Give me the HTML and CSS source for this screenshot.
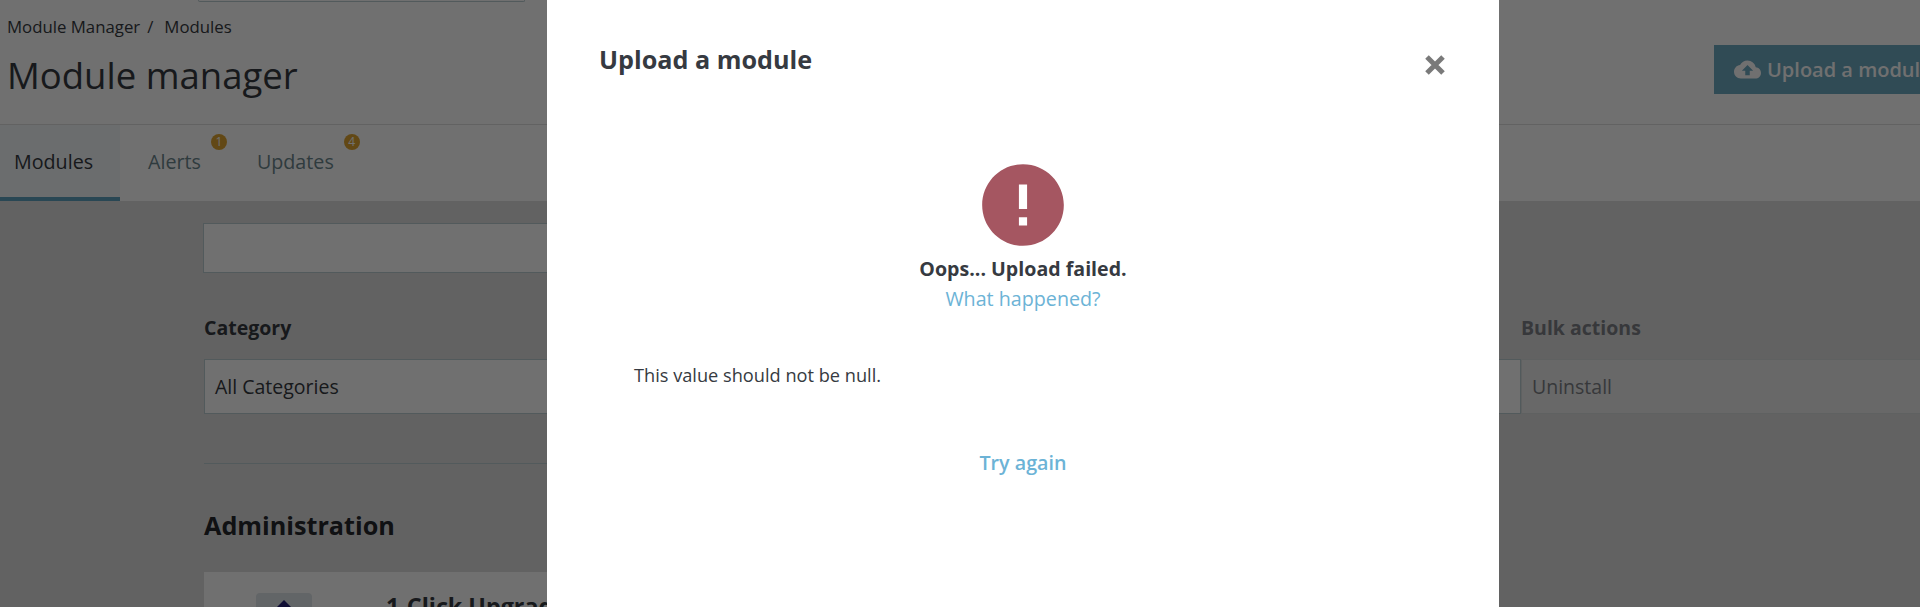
FILE: index.html
```html
<!DOCTYPE html>
<html lang="en">
<head>
  <meta charset="UTF-8">
  <meta name="viewport" content="width=device-width, initial-scale=1.0">
  <title>Module manager</title>
  <link rel="stylesheet" href="styles.css">
</head>
<body>
  <div class="page">
    <header class="page-head">
      <div class="top-search"></div>
      <nav class="breadcrumb"><span>Module Manager</span><span class="sep">/</span><span>Modules</span></nav>
      <div class="title-row">
        <h1>Module manager</h1>
        <button class="upload-btn">
          <svg class="cloud" viewBox="0 0 24 24"><path d="M19.35 10.04C18.67 6.59 15.64 4 12 4 9.11 4 6.6 5.64 5.35 8.04 2.34 8.36 0 10.91 0 14c0 3.31 2.69 6 6 6h13c2.76 0 5-2.24 5-5 0-2.64-2.05-4.78-4.65-4.96zM14 13v4h-4v-4H7l5-5 5 5h-3z"/></svg>
          Upload a module
        </button>
      </div>
    </header>

    <div class="tabs">
      <a class="tab active">Modules</a>
      <a class="tab tab-alerts">Alerts<span class="badge">1</span></a>
      <a class="tab">Updates<span class="badge">4</span></a>
    </div>

    <main class="content">
      <div class="search-box"></div>
      <div class="filters">
        <div class="filter filter-category">
          <label>Category</label>
          <div class="select">All Categories</div>
        </div>
        <div class="filter filter-bulk">
          <label>Bulk actions</label>
          <div class="select">Uninstall</div>
        </div>
      </div>
      <hr class="divider">
      <h2>Administration</h2>
      <div class="module-card">
        <div class="module-icon"><svg viewBox="0 0 56 56"><path d="M28 7L46 25V56H10V25z"/></svg></div>
        <div class="module-name">1-Click Upgrade</div>
      </div>
    </main>
  </div>

  <div class="backdrop"></div>

  <div class="dialog">
    <div class="dialog-head">
      <h3>Upload a module</h3>
      <svg class="close" viewBox="0 0 20 20"><path d="M2 2L18 18M18 2L2 18"/></svg>
    </div>
    <div class="dialog-status">
      <svg class="error-icon" viewBox="0 0 24 24"><path d="M12 2C6.48 2 2 6.48 2 12s4.48 10 10 10 10-4.48 10-10S17.52 2 12 2zm1 15h-2v-2h2v2zm0-4h-2V7h2v6z"/></svg>
      <p class="oops">Oops... Upload failed.</p>
      <a class="what">What happened?</a>
    </div>
    <p class="message">This value should not be null.</p>
    <a class="retry">Try again</a>
  </div>
</body>
</html>
```

FILE: styles.css
```css
* {
  margin: 0;
  padding: 0;
  box-sizing: border-box;
}

html,
body {
  height: 607px;
  overflow: hidden;
}

body {
  font-family: "Open Sans", sans-serif;
  color: #363a41;
  background-color: #e0e0e0;
}

.page {
  width: 1920px;
}

/* Page header */
.page-head {
  background-color: #fff;
  height: 125px;
  padding-left: 7px;
  border-bottom: 1px solid #dfdfdf;
}

.top-search {
  width: 327px;
  height: 2px;
  margin-left: 191px;
  border: 1px solid #bbcdd2;
  border-top: none;
  border-radius: 0 0 4px 4px;
}

.breadcrumb {
  display: flex;
  gap: 7px;
  margin-top: 14px;
  font-size: 16.8px;
  line-height: 22px;
}

.breadcrumb .sep {
  margin-right: 4px;
}

.title-row {
  display: flex;
  margin-top: 13px;
}

h1 {
  flex-shrink: 0;
  width: 1707px;
  font-size: 36.5px;
  font-weight: 400;
  line-height: 49px;
  color: #363a41;
}

.upload-btn {
  display: flex;
  align-items: center;
  gap: 6px;
  flex-shrink: 0;
  width: 300px;
  height: 49px;
  margin-top: -6px;
  padding-left: 20px;
  border: none;
  font-family: inherit;
  font-size: 20px;
  font-weight: 600;
  color: #fff;
  background-color: #6daac2;
}

.cloud {
  width: 27px;
  height: 27px;
  fill: #fff;
}

/* Tabs */
.tabs {
  display: flex;
  height: 77px;
  background-color: #fff;
  border-bottom: 1px solid #dfdfdf;
}

.tab {
  position: relative;
  padding: 24px 14px 0;
  font-size: 19.7px;
  line-height: 26px;
  color: #6c868e;
}

.tab.active {
  width: 120px;
  color: #363a41;
  background-color: #f4f8fb;
  border-bottom: 4px solid #5fa3bf;
}

.tab-alerts {
  margin: 0 28px 0 14px;
}

.badge {
  position: absolute;
  top: 9px;
  right: -12px;
  width: 16px;
  height: 16px;
  border-radius: 50%;
  font-size: 12px;
  line-height: 16px;
  text-align: center;
  color: #fff;
  background-color: #e0a531;
}

/* Filters and list */
.content {
  padding: 21px 0 0 204px;
}

.search-box {
  width: 500px;
  height: 50px;
  margin-left: -1px;
  border: 1px solid #bbcdd2;
  background-color: #fff;
}

.filters {
  display: flex;
  margin-top: 43px;
}

.filter {
  flex-shrink: 0;
}

.filter label {
  display: block;
  font-size: 19.5px;
  font-weight: 700;
  line-height: 24px;
  margin-bottom: 19px;
}

.filter-category {
  width: 1317px;
}

.filter-bulk {
  width: 440px;
}

.filter-bulk label {
  color: #7d8186;
}

.select {
  height: 55px;
  padding-left: 10px;
  border: 1px solid #bbcdd2;
  background-color: #fff;
  font-size: 19.5px;
  line-height: 53px;
}

.filter-bulk .select {
  border-color: #d8dcde;
  background-color: #ededed;
  color: #7d8186;
}

.divider {
  width: 1200px;
  margin-top: 49px;
  border: none;
  border-top: 1px solid #bbcdd2;
}

h2 {
  margin-top: 45px;
  font-size: 25.2px;
  font-weight: 700;
  line-height: 32px;
  color: #25282d;
}

.module-card {
  display: flex;
  width: 1200px;
  height: 100px;
  margin-top: 31px;
  padding: 21px 0 0 52px;
  background-color: #fff;
}

.module-icon {
  flex-shrink: 0;
  width: 56px;
  height: 56px;
  border-radius: 4px;
  background-color: #dfe6ea;
}

.module-icon svg {
  display: block;
}

.module-icon path {
  fill: #25207a;
}

.module-name {
  margin-left: 74px;
  font-size: 23.3px;
  font-weight: 700;
  line-height: 27px;
}

/* Modal */
.backdrop {
  position: fixed;
  inset: 0;
  background-color: rgba(0, 0, 0, 0.56);
}

.dialog {
  position: fixed;
  top: 0;
  left: 547px;
  display: flex;
  flex-direction: column;
  width: 952px;
  height: 607px;
  padding: 0 52px;
  background-color: #fff;
}

.dialog-head {
  display: flex;
  justify-content: space-between;
  align-items: flex-start;
  padding-top: 43px;
}

h3 {
  font-size: 25.2px;
  font-weight: 700;
  line-height: 32px;
  color: #363a41;
}

.close {
  width: 20px;
  height: 20px;
  margin: 12px 2px 0 0;
  fill: none;
  stroke: #7a7a7a;
  stroke-width: 5;
}

.dialog-status {
  display: flex;
  flex-direction: column;
  align-items: center;
  margin-top: 81px;
}

.error-icon {
  width: 98px;
  height: 98px;
  fill: #a55661;
}

.oops {
  margin-top: 3px;
  font-size: 19.6px;
  font-weight: 700;
  line-height: 24px;
}

.what {
  margin-top: 6px;
  font-size: 19.7px;
  line-height: 24px;
  color: #6cb3d6;
}

.message {
  margin: 53px 0 0 35px;
  font-size: 18.2px;
  line-height: 22px;
}

.retry {
  align-self: center;
  margin-top: 65px;
  font-size: 19.7px;
  font-weight: 600;
  line-height: 24px;
  color: #6cb3d6;
}
```
